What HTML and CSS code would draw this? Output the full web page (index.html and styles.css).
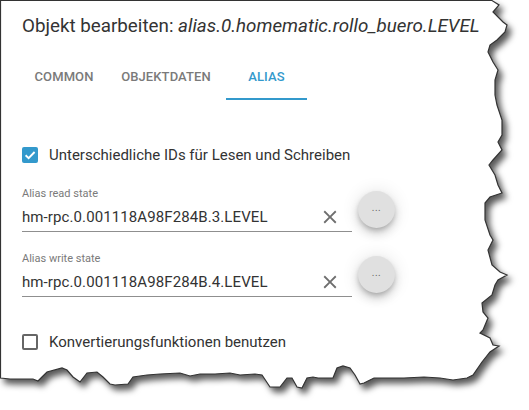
FILE: index.html
```html
<!DOCTYPE html>
<html lang="de">
<head>
<meta charset="utf-8">
<title>Objekt bearbeiten</title>
<link rel="stylesheet" href="styles.css">
</head>
<body>
<div class="page">
  <svg class="torn" width="529" height="410" viewBox="0 0 529 410" aria-hidden="true">
    <polygon points="0.5,0.5 492,0.5 499,5 493,12 503,22 507,25 505,32 497,40 490,45 488,52 493,62 498,70 495,80 495,95 497,105 502,120 502,135 498,142 502,150 493,160 489,165 495,175 498,185 502,193 490,197 485,203 485,220 490,235 493,240 488,250 492,265 500,272 507,275 498,280 495,285 492,295 482,303 483,312 488,318 483,330 480,333 490,338 493,345 499,346 490,352 482,362 473,375 467,378 453,380 440,378 424,377 404,378 374,378 364,383 360,384 355,375 350,368 343,366 337,368 333,378 318,378 313,377 307,378 302,388 297,387 292,378 287,378 280,387 270,387 262,375 255,374 240,375 230,373 215,374 200,374 190,376 180,373 160,374 147,375 133,377 128,384 115,385 110,384 103,377 97,372 87,373 80,382 73,377 67,370 62,368 47,372 42,377 38,381 33,379 10,379 0.5,378"/>
  </svg>
  <div class="dialog">
    <h2 class="title">Objekt bearbeiten: <em>alias.0.homematic.rollo_buero.LEVEL</em></h2>
    <div class="tabs">
      <div class="tab tab-common">COMMON</div>
      <div class="tab tab-data">OBJEKTDATEN</div>
      <div class="tab tab-alias active">ALIAS</div>
    </div>
    <div class="content">
      <div class="check-row first">
        <span class="box checked">
          <svg viewBox="0 0 16 16" width="16" height="16"><path d="M3.6 8.2 L6.6 11.1 L12.6 5" fill="none" stroke="#fff" stroke-width="1.9"/></svg>
        </span>
        <span class="check-label">Unterschiedliche IDs für Lesen und Schreiben</span>
      </div>

      <div class="field-row read">
        <div class="field">
          <div class="field-label">Alias read state</div>
          <div class="input">
            <span class="value">hm-rpc.0.001118A98F284B.3.LEVEL</span>
            <svg class="clear" viewBox="0 0 24 24" width="22" height="22"><path d="M19 6.41L17.59 5 12 10.59 6.41 5 5 6.41 10.59 12 5 17.59 6.41 19 12 13.41 17.59 19 19 17.59 13.41 12z"/></svg>
          </div>
        </div>
        <button class="more">...</button>
      </div>

      <div class="field-row write">
        <div class="field">
          <div class="field-label">Alias write state</div>
          <div class="input">
            <span class="value">hm-rpc.0.001118A98F284B.4.LEVEL</span>
            <svg class="clear" viewBox="0 0 24 24" width="22" height="22"><path d="M19 6.41L17.59 5 12 10.59 6.41 5 5 6.41 10.59 12 5 17.59 6.41 19 12 13.41 17.59 19 19 17.59 13.41 12z"/></svg>
          </div>
        </div>
        <button class="more">...</button>
      </div>

      <div class="check-row last">
        <span class="box"></span>
        <span class="check-label">Konvertierungsfunktionen benutzen</span>
      </div>
    </div>
  </div>
</div>
</body>
</html>
```

FILE: styles.css
```css
* { box-sizing: border-box; }

html, body {
  margin: 0;
  padding: 0;
  background: #fff;
}

body {
  font-family: Roboto, "Liberation Sans", sans-serif;
  color: rgba(0, 0, 0, 0.87);
}

.page {
  position: relative;
  width: 529px;
  height: 410px;
  overflow: hidden;
}

.torn {
  position: absolute;
  left: 0;
  top: 0;
  overflow: visible;
  filter: drop-shadow(4px 5px 3px rgba(0, 0, 0, 0.65));
}

.torn polygon {
  fill: #fff;
  stroke: #333;
  stroke-width: 1.2;
  stroke-linejoin: miter;
}

.dialog {
  position: relative;
  display: flex;
  flex-direction: column;
  padding-top: 14px;
}

.title {
  margin: 0 0 0 22px;
  font-size: 18.8px;
  line-height: 24px;
  font-weight: 400;
  color: #333;
  white-space: nowrap;
}

.title em {
  font-style: italic;
}

.tabs {
  display: flex;
  margin-top: 14px;
  padding-left: 22px;
  height: 48px;
}

.tab {
  display: flex;
  align-items: center;
  justify-content: center;
  height: 48px;
  padding-top: 4px;
  font-size: 13px;
  line-height: 16px;
  font-weight: 500;
  letter-spacing: 0.1px;
  color: #7a7a7a;
  border-bottom: 2px solid transparent;
}

.tab-common { width: 84px; }
.tab-data { width: 120px; }
.tab-alias { width: 81px; }

.tab.active {
  color: #3399cc;
  border-bottom-color: #3399cc;
}

.content {
  display: flex;
  flex-direction: column;
  padding-left: 22px;
}

.check-row {
  display: flex;
  align-items: center;
  gap: 11px;
  height: 16px;
}

.check-row.first { margin-top: 47px; }
.check-row.last { margin-top: 37px; }

.box {
  display: flex;
  width: 16px;
  height: 16px;
  border: 2px solid #666;
  border-radius: 2px;
  flex: none;
}

.box.checked {
  border: none;
  background: #3399cc;
}

.check-label {
  font-size: 15px;
  line-height: 18px;
  color: #333;
  white-space: nowrap;
}

.field-row {
  display: flex;
  align-items: center;
  gap: 6px;
}

.field-row.read { margin-top: 24px; }
.field-row.write { margin-top: 20px; }

.field {
  width: 330px;
  display: flex;
  flex-direction: column;
}

.field-label {
  font-size: 11px;
  line-height: 14px;
  color: #7a7a7a;
}

.input {
  display: flex;
  align-items: center;
  margin-top: 6px;
  padding-bottom: 4px;
  border-bottom: 1px solid #8f8f8f;
  height: 25px;
}

.value {
  flex: 1;
  font-size: 15px;
  line-height: 19px;
  letter-spacing: 0.1px;
  color: #333;
  white-space: nowrap;
}

.clear {
  fill: #6e6e6e;
  margin: -2px 11px -2px 0;
  flex: none;
}

.more {
  width: 37px;
  height: 37px;
  border-radius: 50%;
  border: none;
  padding: 0 0 4px;
  background: #e0e0e0;
  color: #666;
  font-family: Roboto, "Liberation Sans", sans-serif;
  font-size: 10px;
  line-height: 10px;
  letter-spacing: 0.5px;
  box-shadow: 0 3px 5px -1px rgba(0, 0, 0, 0.2), 0 6px 10px 0 rgba(0, 0, 0, 0.14), 0 1px 18px 0 rgba(0, 0, 0, 0.12);
}
```
